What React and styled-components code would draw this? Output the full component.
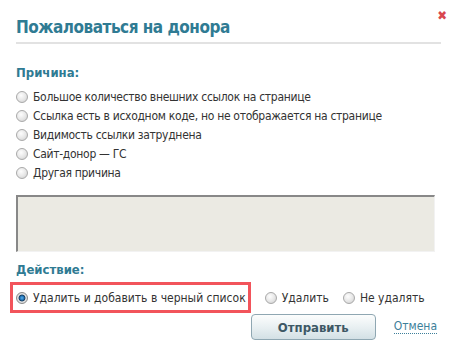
import styled, { createGlobalStyle, css } from "styled-components";

const GlobalStyle = createGlobalStyle`
  body {
    margin: 0;
    background: #fff;
    font-family: "DejaVu Sans Condensed", "DejaVu Sans", Verdana, sans-serif;
  }
`;

const reasons = [
  "Большое количество внешних ссылок на странице",
  "Ссылка есть в исходном коде, но не отображается на странице",
  "Видимость ссылки затруднена",
  "Сайт-донор — ГС",
  "Другая причина",
];

const Dialog = styled.div`
  width: 458px;
  box-sizing: border-box;
  padding: 14px 17px 0 16px;
  color: #333;
  font-size: 12px;
`;

const Header = styled.div`
  display: flex;
  justify-content: space-between;
  align-items: flex-start;
  padding-bottom: 4px;
  border-bottom: 2px solid #e2e2e2;
`;

const Title = styled.h2`
  margin: 2px 0 0;
  font-size: 17px;
  line-height: 22px;
  letter-spacing: -0.5px;
  font-weight: bold;
  color: #2f7b93;
`;

const Close = styled.span`
  margin: -5px -6px 0 0;
  color: #d9474f;
  font-size: 13px;
  font-weight: bold;
  line-height: 14px;
  cursor: pointer;
`;

const Label = styled.div`
  margin-top: ${(p) => p.$top}px;
  font-size: 13px;
  font-weight: bold;
  color: #2f7b93;
  line-height: 16px;
`;

const List = styled.div`
  display: flex;
  flex-direction: column;
  gap: 3px;
  margin-top: 8px;
  letter-spacing: -0.3px;
`;

const Option = styled.label`
  display: flex;
  align-items: center;
  gap: 5px;
  line-height: 16px;
  white-space: nowrap;
  cursor: pointer;
`;

const Radio = styled.span`
  width: 12px;
  height: 12px;
  border-radius: 50%;
  flex: none;
  box-sizing: border-box;
  border: 1px solid #a9a9a9;
  background: radial-gradient(circle at 40% 35%, #fdfdfd 0%, #e6e6e6 55%, #c9c9c9 100%);
  ${(p) =>
    p.$checked &&
    css`
      border-color: #8a8a8a;
      background: radial-gradient(circle at 50% 50%, #5fb3ea 0%, #1f72b8 28%, #1a3f60 42%, #e6e6e6 55%, #bdbdbd 100%);
    `}
`;

const Area = styled.div`
  margin-top: 14px;
  height: 54px;
  margin-right: 6px;
  background: #ebeae3;
  border-top: 2px solid #888;
  border-left: 2px solid #888;
  border-right: 1px solid #f2f2f2;
  border-bottom: 1px solid #f2f2f2;
`;

const ActionRow = styled.div`
  display: flex;
  align-items: center;
  gap: 14px;
  margin: 4px 0 0 -6px;
`;

const Highlight = styled.div`
  display: flex;
  align-items: center;
  height: 31px;
  box-sizing: border-box;
  padding: 0 2px 0 3px;
  border: 3px solid #f2545b;
`;

const Footer = styled.div`
  display: flex;
  justify-content: flex-end;
  align-items: center;
  gap: 18px;
  margin-top: 1px;
  padding-right: 4px;
`;

const Button = styled.button`
  width: 125px;
  height: 26px;
  border: 1px solid #8fa7b2;
  border-radius: 4px;
  background: linear-gradient(#fcfdfd 0%, #e9f0f2 50%, #d3e0e5 100%);
  font-family: inherit;
  font-size: 13px;
  font-weight: bold;
  color: #3d5865;
  cursor: pointer;
`;

const Cancel = styled.a`
  color: #3d7f9a;
  font-size: 12px;
  text-decoration: none;
  border-bottom: 1px dotted #3d7f9a;
  line-height: 13px;
  cursor: pointer;
`;

export default function App() {
  return (
    <>
      <GlobalStyle />
      <Dialog>
        <Header>
          <Title>Пожаловаться на донора</Title>
          <Close>✖</Close>
        </Header>
        <Label $top={21}>Причина:</Label>
        <List>
          {reasons.map((r) => (
            <Option key={r}>
              <Radio />
              {r}
            </Option>
          ))}
        </List>
        <Area />
        <Label $top={10}>Действие:</Label>
        <ActionRow>
          <Highlight>
            <Option>
              <Radio $checked />
              Удалить и добавить в черный список
            </Option>
          </Highlight>
          <Option>
            <Radio />
            Удалить
          </Option>
          <Option>
            <Radio />
            Не удалять
          </Option>
        </ActionRow>
        <Footer>
          <Button>Отправить</Button>
          <Cancel>Отмена</Cancel>
        </Footer>
      </Dialog>
    </>
  );
}
